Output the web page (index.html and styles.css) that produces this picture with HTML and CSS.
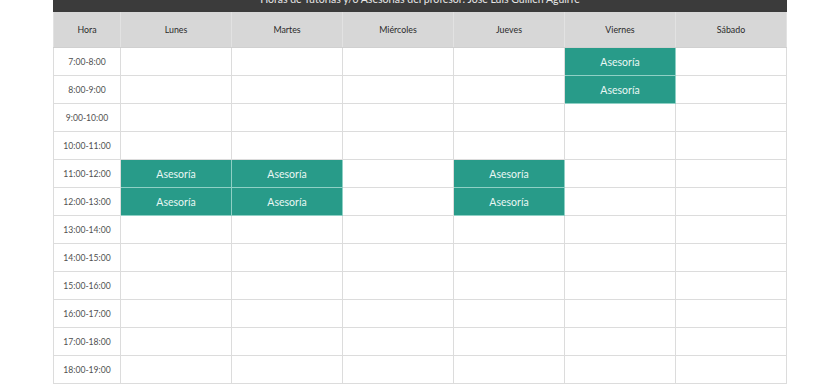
FILE: index.html
```
<!DOCTYPE html>
<html lang="es">
<head>
<meta charset="utf-8">
<title>Horario</title>
<link rel="stylesheet" href="styles.css">
</head>
<body>
<div class="wrap">
  <div class="title">Horas de Tutorías y/o Asesorías del profesor: José Luis Guillén Aguirre</div>
  <table class="schedule">
    <thead>
      <tr><th class="hora">Hora</th><th>Lunes</th><th>Martes</th><th>Miércoles</th><th>Jueves</th><th>Viernes</th><th>Sábado</th></tr>
    </thead>
    <tbody>
      <tr><td class="hora">7:00-8:00</td><td></td><td></td><td></td><td></td><td class="busy">Asesoría</td><td></td></tr>
      <tr><td class="hora">8:00-9:00</td><td></td><td></td><td></td><td></td><td class="busy">Asesoría</td><td></td></tr>
      <tr><td class="hora">9:00-10:00</td><td></td><td></td><td></td><td></td><td></td><td></td></tr>
      <tr><td class="hora">10:00-11:00</td><td></td><td></td><td></td><td></td><td></td><td></td></tr>
      <tr><td class="hora">11:00-12:00</td><td class="busy">Asesoría</td><td class="busy">Asesoría</td><td></td><td class="busy">Asesoría</td><td></td><td></td></tr>
      <tr><td class="hora">12:00-13:00</td><td class="busy">Asesoría</td><td class="busy">Asesoría</td><td></td><td class="busy">Asesoría</td><td></td><td></td></tr>
      <tr><td class="hora">13:00-14:00</td><td></td><td></td><td></td><td></td><td></td><td></td></tr>
      <tr><td class="hora">14:00-15:00</td><td></td><td></td><td></td><td></td><td></td><td></td></tr>
      <tr><td class="hora">15:00-16:00</td><td></td><td></td><td></td><td></td><td></td><td></td></tr>
      <tr><td class="hora">16:00-17:00</td><td></td><td></td><td></td><td></td><td></td><td></td></tr>
      <tr><td class="hora">17:00-18:00</td><td></td><td></td><td></td><td></td><td></td><td></td></tr>
      <tr><td class="hora">18:00-19:00</td><td></td><td></td><td></td><td></td><td></td><td></td></tr>
    </tbody>
  </table>
</div>
</body>
</html>
```

FILE: styles.css
```
html, body {
  margin: 0;
  padding: 0;
  background: #ffffff;
  font-family: Lato, "Open Sans", "Liberation Sans", sans-serif;
  overflow: hidden;
}

.wrap {
  width: 734px;
  margin: -14px auto 0;
}

.title {
  background: #3b3b3b;
  color: #e6e6e6;
  text-align: center;
  font-size: 10.5px;
  line-height: 14px;
  height: 26px;
  box-sizing: border-box;
  padding: 6px 0 6px;
}

.schedule {
  width: 734px;
  border-collapse: collapse;
  table-layout: fixed;
}

.schedule th,
.schedule td {
  border: 1px solid #dcdcdc;
  text-align: center;
  padding: 0;
  overflow: hidden;
  white-space: nowrap;
}

.schedule th {
  background: #d7d7d7;
  color: #2a2a2a;
  font-weight: normal;
  font-size: 8.8px;
  height: 35px;
  border-top: none;
  border-color: #d0d0d0 #e2e2e2 #d0d0d0 #e2e2e2;
}

.schedule th.hora {
  width: 66px;
}

.schedule td {
  height: 27px;
  font-size: 8.6px;
  color: #505050;
}

.schedule td.busy {
  background: #289b89;
  color: #eaf7f4;
  font-size: 10.5px;
  border-color: #8fd0c5;
}
```
